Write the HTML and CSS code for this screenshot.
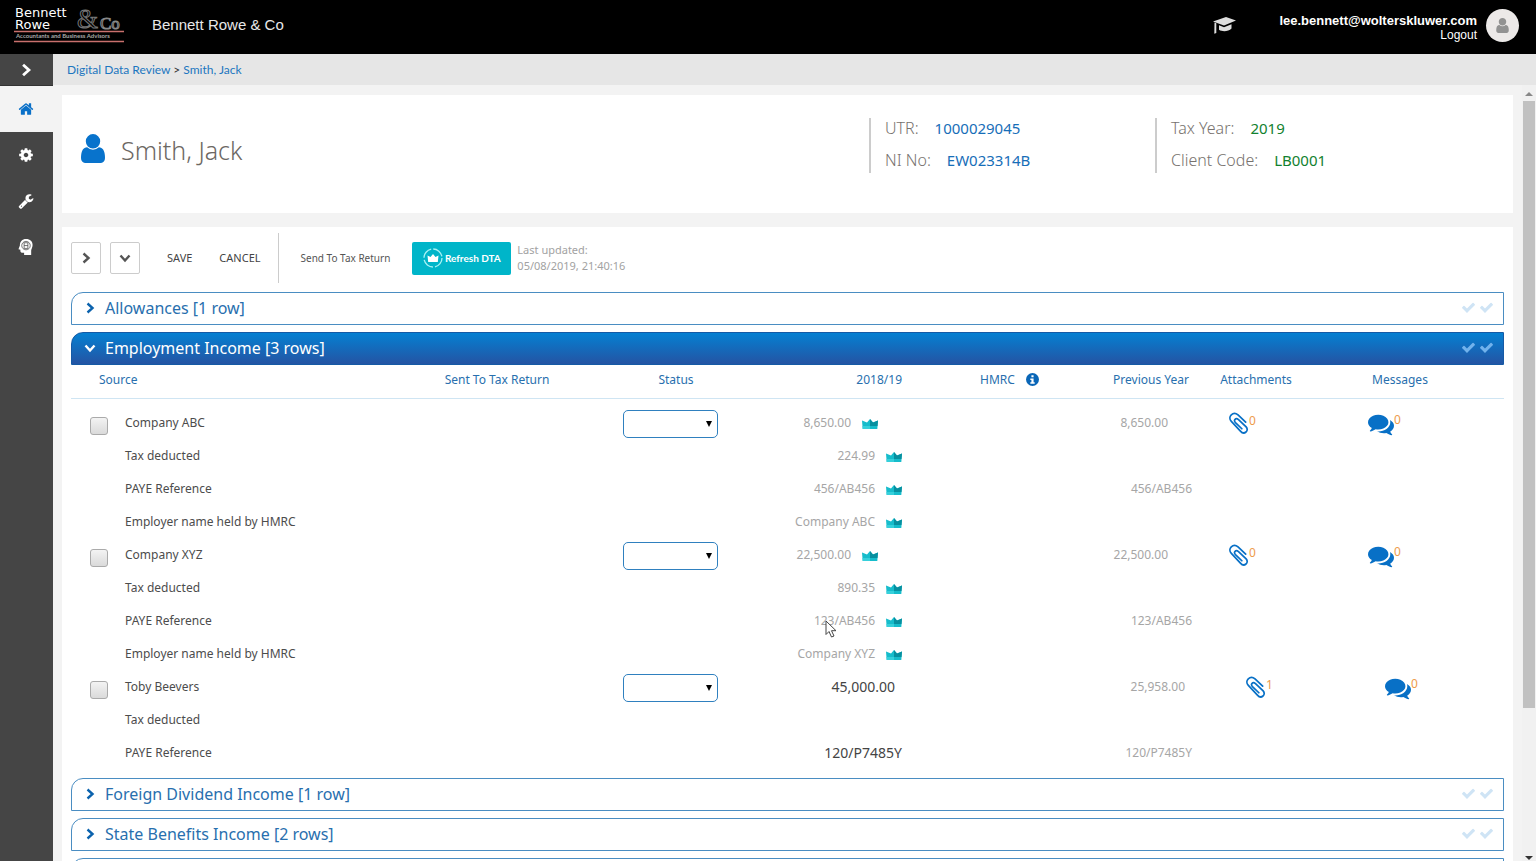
FILE: index.html
```html
<!DOCTYPE html>
<html lang="en">
<head>
<meta charset="utf-8">
<title>Digital Data Review - Smith, Jack</title>
<link rel="stylesheet" href="styles.css">
</head>
<body>
<svg class="sprite" aria-hidden="true">
  <symbol id="check" viewBox="0 0 1792 1792"><path d="M1671 566q0 40-28 68l-724 724-136 136q-28 28-68 28t-68-28l-136-136-362-362q-28-28-28-68t28-68l136-136q28-28 68-28t68 28l294 295 656-657q28-28 68-28t68 28l136 136q28 28 28 68z"/></symbol>
  <symbol id="home" viewBox="0 0 1792 1792"><path d="M1472 992v480q0 26-19 45t-45 19h-384v-384h-256v384h-384q-26 0-45-19t-19-45v-480q0-1 .5-3t.5-3l575-474 575 474q1 2 1 6zm223-69l-62 74q-8 9-21 11h-3q-13 0-21-7l-692-577-692 577q-12 8-24 7-13-2-21-11l-62-74q-8-10-7-23.500t11-21.500l719-599q32-26 76-26t76 26l244 204v-195q0-14 9-23t23-9h192q14 0 23 9t9 23v408l219 182q10 8 11 21.500t-7 23.500z"/></symbol>
  <symbol id="cog" viewBox="0 0 1792 1792"><path d="M1152 896q0-106-75-181t-181-75-181 75-75 181 75 181 181 75 181-75 75-181zm512-109v222q0 12-8 23t-20 13l-185 28q-19 54-39 91 35 50 107 138 10 12 10 25t-9 23q-27 37-99 108t-94 71q-12 0-26-9l-138-108q-44 23-91 38-16 136-29 186-7 28-36 28h-222q-14 0-24.500-8.500t-11.500-21.500l-28-184q-49-16-90-37l-141 107q-10 9-25 9-14 0-25-11-126-114-165-168-7-10-7-23 0-12 8-23 15-21 51-66.500t54-70.500q-27-50-41-99l-183-27q-13-2-21-12.500t-8-23.500v-222q0-12 8-23t19-13l186-28q14-46 39-92-40-57-107-138-10-12-10-24 0-10 9-23 26-36 98.500-107.500t94.500-71.500q13 0 26 10l138 107q44-23 91-38 16-136 29-186 7-28 36-28h222q14 0 24.500 8.500t11.500 21.500l28 184q49 16 90 37l142-107q9-9 24-9 13 0 25 10 129 119 165 170 7 8 7 22 0 12-8 23-15 21-51 66.500t-54 70.500q26 50 41 98l183 28q13 2 21 12.500t8 23.500z"/></symbol>
  <symbol id="wrench" viewBox="0 0 1792 1792"><path d="M448 1472q0-26-19-45t-45-19-45 19-19 45 19 45 45 19 45-19 19-45zm644-420l-682 682q-37 37-90 37-52 0-91-37l-106-108q-38-36-38-90 0-53 38-91l681-681q39 98 114.500 173.500t173.500 114.500zm634-435q0 39-23 106-47 134-164.500 217.500t-258.500 83.500q-185 0-316.500-131.500t-131.500-316.500 131.500-316.500 316.500-131.500q58 0 121.500 16.500t107.500 46.500q16 11 16 28t-16 28l-293 169v224l193 107q5-3 79-48.500t135.500-81 70.500-35.500q15 0 23.500 10t8.500 25z"/></symbol>
  <symbol id="user" viewBox="256 128 1280 1536"><path d="M1536 1399q0 109-62.500 187t-150.500 78h-854q-88 0-150.500-78t-62.500-187q0-85 8.500-160.500t31.500-152 58.500-131 94-89 134.500-34.500q131 128 313 128t313-128q76 0 134.500 34.500t94 89 58.500 131 31.500 152 8.500 160.500zm-256-887q0 159-112.500 271.500t-271.500 112.500-271.500-112.500-112.500-271.500 112.500-271.500 271.500-112.500 271.500 112.500 112.500 271.500z"/></symbol>
  <symbol id="comments" viewBox="0 0 1792 1792"><path d="M1408 768q0 139-94 257t-256.500 186.500-353.500 68.500q-86 0-176-16-124 88-278 128-36 9-86 16h-3q-11 0-20.500-8t-11.500-21q-1-3-1-6.500t.5-6.500 2-6l2.500-5 3.500-5.500 4-5 4.500-5 4-4.500q5-6 23-25t26-29.500 22.500-29 25-38.500 20.500-44q-124-72-195-177t-71-224q0-139 94-257t256.500-186.500 353.500-68.500 353.500 68.500 256.500 186.500 94 257zm384 256q0 120-71 224.500t-195 176.500q10 24 20.500 44t25 38.500 22.500 29 26 29.500 23 25q1 1 4 4.500t4.500 5 4 5 3.500 5.500l2.500 5 2 6 .5 6.500-1 6.500q-3 14-13 22t-22 7q-50-7-86-16-154-40-278-128-90 16-176 16-271 0-472-132 58 4 88 4 161 0 309-45t264-129q125-92 192-212t67-254q0-77-23-152 129 71 204 178t75 230z"/></symbol>
  <symbol id="clip" viewBox="0 0 22 24"><path d="M18.500 10.500 10.500 3C5.500-1.500-1 5 3.500 9.800l9.500 10.200c4 4.500 9.500-.5 6-4.500L11 8C8 5.500 5.500 8.500 7.800 11l6.700 6.500" fill="none" stroke="currentColor" stroke-width="1.800" stroke-linecap="round"/></symbol>
  <symbol id="crown" viewBox="0 0 16 10" preserveAspectRatio="none"><path fill="#16bccb" d="M0 1.500 5 3.500 8 0l3 3.500 5-2L15.300 10H.7z"/><path fill="#078f9f" d="M8 0l3 3.500 5-2-.5 5.500L8 7z"/><path fill="#36d0db" d="M.5 7H8v3H.7z"/></symbol>
  <symbol id="right" viewBox="0 0 10 12"><path d="M2.500 1.500 7.500 6l-5 4.500" fill="none" stroke="currentColor" stroke-width="2.400"/></symbol>
  <symbol id="down" viewBox="0 0 12 10"><path d="M1.500 2.500 6 7.500l4.500-5" fill="none" stroke="currentColor" stroke-width="2.400"/></symbol>
  <symbol id="cap" viewBox="0 0 23 17"><path d="M0 4.500 13 0l10 3.500L11 8.500zM6 8.200l5 2 7.500-3v4.300c-3 3-9 3.500-12.500 1.200zM1.500 5.500l1.800.7V16l-2 .8z"/></symbol>
  <symbol id="head" viewBox="0 0 16 17"><path d="M8 0c4.500 0 7 2.500 7 6.500 0 3-1.500 4.500-1.500 6V17H6v-2.500H3.500C2 14.500 2 13 2 11.500L0 11l1.500-4C1.500 2.500 4 0 8 0z"/><g fill="none" stroke="#454545" stroke-width=".8"><circle cx="8" cy="7" r="4.500"/><path d="M6 4v6h4V4zM6 7h4"/></g></symbol>
</svg>

<header class="topbar">
  <svg class="logo" viewBox="0 0 112 38" role="img" aria-label="Bennett Rowe and Co">
    <text x="1" y="11" class="logo-name">Bennett</text>
    <text x="1" y="23" class="logo-name">Rowe</text>
    <text x="63" y="22" class="logo-amp">&amp;</text>
    <text x="86" y="23" class="logo-co">Co</text>
    <path d="M0 25.500h110M0 35.500h110" stroke="#c9706d" stroke-width="1.600"/>
    <text x="2" y="32" class="logo-tag">Accountants and Business Advisors</text>
  </svg>
  <span class="firm">Bennett Rowe &amp; Co</span>
  <svg class="i-cap"><use href="#cap"/></svg>
  <div class="account"><b>lee.bennett@wolterskluwer.com</b><a href="#">Logout</a></div>
  <span class="avatar"><svg><use href="#user"/></svg></span>
</header>

<div class="shell">
  <nav class="side">
    <button class="expand" aria-label="Expand menu"><svg><use href="#right"/></svg></button>
    <a class="active" href="#" aria-label="Home"><svg><use href="#home"/></svg></a>
    <a href="#" aria-label="Settings"><svg><use href="#cog"/></svg></a>
    <a href="#" aria-label="Tools"><svg><use href="#wrench"/></svg></a>
    <a href="#" aria-label="Knowledge"><svg><use href="#head"/></svg></a>
  </nav>
  <div class="page">
    <div class="crumbs"><a href="#">Digital Data Review</a> &gt; <a href="#">Smith, Jack</a></div>
    <div class="view">
      <main class="content">
        <section class="card client">
          <svg class="i-client"><use href="#user"/></svg>
          <h1>Smith, Jack</h1>
          <dl class="facts"><div><dt>UTR:</dt><dd>1000029045</dd></div><div><dt>NI No:</dt><dd>EW023314B</dd></div></dl>
          <dl class="facts green"><div><dt>Tax Year:</dt><dd>2019</dd></div><div><dt>Client Code:</dt><dd>LB0001</dd></div></dl>
        </section>

        <section class="card data">
          <div class="tools">
            <button class="square" aria-label="Expand rows"><svg><use href="#right"/></svg></button>
            <button class="square second" aria-label="Collapse rows"><svg><use href="#down"/></svg></button>
            <button class="plain">SAVE</button>
            <button class="plain cancel">CANCEL</button>
            <button class="plain send">Send To Tax Return</button>
            <button class="refresh"><svg viewBox="0 0 20 20"><circle cx="10" cy="10" r="9" fill="none" stroke="#a8f2f4" stroke-width="1.300" stroke-dasharray="12 2.137"/><path fill="#fff" d="M4.500 7.500 7.500 9 10 6l2.500 3 3-1.500-.7 6.500H5.200z"/></svg>Refresh DTA</button>
            <p class="updated">Last updated:<br>05/08/2019, 21:40:16</p>
          </div>

          <button class="bar"><svg class="chev"><use href="#right"/></svg><span>Allowances [1 row]</span><svg class="tick"><use href="#check"/></svg><svg class="tick"><use href="#check"/></svg></button>
          <button class="bar open"><svg class="chev"><use href="#down"/></svg><span>Employment Income [3 rows]</span><svg class="tick"><use href="#check"/></svg><svg class="tick"><use href="#check"/></svg></button>

          <table>
            <colgroup><col class="c-box"><col><col class="c-sent"><col class="c-status"><col class="c-value"><col class="c-hmrc"><col class="c-prev"><col class="c-att"><col class="c-msg"></colgroup>
            <thead><tr><th colspan="2" class="source">Source</th><th>Sent To Tax Return</th><th>Status</th><th class="num">2018/19</th><th class="num">HMRC <svg class="info" viewBox="0 0 12 12"><circle cx="6" cy="6" r="6" fill="#0a66b7"/><path d="M5 2h2v2H5zM4 5h3v3.500h1V10H4V8.500h1v-2H4z" fill="#fff"/></svg></th><th class="num prev">Previous Year</th><th>Attachments</th><th class="msg">Messages</th></tr></thead>
            <tbody>
              <tr class="main"><td class="box"><input type="checkbox" id="abc"></td><td><label for="abc">Company ABC</label></td><td></td><td class="status"><span class="pick"><select aria-label="Status of Company ABC"><option></option></select></span></td><td class="num">8,650.00<svg class="crown"><use href="#crown"/></svg></td><td></td><td class="num">8,650.00</td><td class="links"><a href="#"><svg class="clip"><use href="#clip"/></svg><sup>0</sup></a></td><td class="links"><a href="#"><svg class="talk"><use href="#comments"/></svg><sup>0</sup></a></td></tr>
              <tr><td></td><td>Tax deducted</td><td></td><td></td><td class="num">224.99<svg class="crown"><use href="#crown"/></svg></td><td></td><td></td><td></td><td></td></tr>
              <tr><td></td><td>PAYE Reference</td><td></td><td></td><td class="num">456/AB456<svg class="crown"><use href="#crown"/></svg></td><td></td><td class="num">456/AB456</td><td></td><td></td></tr>
              <tr><td></td><td>Employer name held by HMRC</td><td></td><td></td><td class="num">Company ABC<svg class="crown"><use href="#crown"/></svg></td><td></td><td></td><td></td><td></td></tr>
              <tr class="main"><td class="box"><input type="checkbox" id="xyz"></td><td><label for="xyz">Company XYZ</label></td><td></td><td class="status"><span class="pick"><select aria-label="Status of Company XYZ"><option></option></select></span></td><td class="num">22,500.00<svg class="crown"><use href="#crown"/></svg></td><td></td><td class="num">22,500.00</td><td class="links"><a href="#"><svg class="clip"><use href="#clip"/></svg><sup>0</sup></a></td><td class="links"><a href="#"><svg class="talk"><use href="#comments"/></svg><sup>0</sup></a></td></tr>
              <tr><td></td><td>Tax deducted</td><td></td><td></td><td class="num">890.35<svg class="crown"><use href="#crown"/></svg></td><td></td><td></td><td></td><td></td></tr>
              <tr><td></td><td>PAYE Reference</td><td></td><td></td><td class="num">123/AB456<svg class="crown"><use href="#crown"/></svg></td><td></td><td class="num">123/AB456</td><td></td><td></td></tr>
              <tr><td></td><td>Employer name held by HMRC</td><td></td><td></td><td class="num">Company XYZ<svg class="crown"><use href="#crown"/></svg></td><td></td><td></td><td></td><td></td></tr>
              <tr class="main manual"><td class="box"><input type="checkbox" id="toby"></td><td><label for="toby">Toby Beevers</label></td><td></td><td class="status"><span class="pick"><select aria-label="Status of Toby Beevers"><option></option></select></span></td><td class="num typed">45,000.00</td><td></td><td class="num">25,958.00</td><td class="links"><a href="#"><svg class="clip"><use href="#clip"/></svg><sup>1</sup></a></td><td class="links"><a href="#"><svg class="talk"><use href="#comments"/></svg><sup>0</sup></a></td></tr>
              <tr><td></td><td>Tax deducted</td><td></td><td></td><td></td><td></td><td></td><td></td><td></td></tr>
              <tr><td></td><td>PAYE Reference</td><td></td><td></td><td class="num typed">120/P7485Y</td><td></td><td class="num">120/P7485Y</td><td></td><td></td></tr>
            </tbody>
          </table>

          <button class="bar"><svg class="chev"><use href="#right"/></svg><span>Foreign Dividend Income [1 row]</span><svg class="tick"><use href="#check"/></svg><svg class="tick"><use href="#check"/></svg></button>
          <button class="bar"><svg class="chev"><use href="#right"/></svg><span>State Benefits Income [2 rows]</span><svg class="tick"><use href="#check"/></svg><svg class="tick"><use href="#check"/></svg></button>
          <div class="bar"></div>
        </section>
      </main>
      <div class="scroll" aria-hidden="true"><i class="up"></i><i class="thumb"></i><i class="dn"></i></div>
    </div>
  </div>
</div>
<svg class="pointer" viewBox="0 0 12 18" aria-hidden="true"><path d="M1 1v13.500l3-3 2.500 5.500 2.500-1-2.500-5.300H11z" fill="#fff" stroke="#444"/></svg>
</body>
</html>
```
FILE: styles.css
```css
* { box-sizing: border-box; }
body { margin: 0; height: 100vh; display: flex; flex-direction: column; overflow: hidden; background: #f3f3f3; font: 12px/16px "Noto Sans", sans-serif; color: #4c4c4c; }
a { text-decoration: none; color: #1c76c0; }
button { font: inherit; border: 0; background: none; padding: 0; color: inherit; }
svg { fill: currentColor; flex: none; display: block; }
.sprite { position: absolute; width: 0; height: 0; }

.topbar { height: 54px; flex: none; background: #000; color: #fff; display: flex; align-items: center; padding: 0 17px 4px 14px; font-family: "Liberation Sans", Arial, sans-serif; }
.logo { width: 112px; height: 38px; overflow: visible; }
.logo text { font-family: Lato, sans-serif; fill: #fff; }
.logo .logo-name { font-family: "DejaVu Sans", sans-serif; font-size: 13px; line-height: 12px; }
.logo .logo-amp { font-family: "Liberation Serif", serif; font-size: 27px; fill: #000; stroke: #777; }
.logo .logo-co { font-family: "Liberation Serif", serif; font-size: 17px; fill: #222; stroke: #888; }
.logo .logo-tag { font-size: 6px; font-weight: 700; fill: #aaa; }
.firm { font-size: 15px; margin-left: 26px; flex: 1; color: #e8e8e8; }
.i-cap { width: 23px; height: 17px; color: #ddd; }
.account { margin-left: 43px; padding-top: 5px; font-size: 13px; line-height: 14px; text-align: right; display: flex; flex-direction: column; }
.account a { color: #fff; font-size: 12px; }
.avatar { width: 33px; height: 33px; margin-left: 9px; border-radius: 50%; background: #ece9e8; color: #929292; display: flex; align-items: center; justify-content: center; }
.avatar svg { width: 13px; height: 15px; }

.shell { flex: 1; min-height: 0; display: flex; }
.side { width: 53px; background: #454545; color: #fff; display: flex; flex-direction: column; }
.side a, .side button { height: 46px; display: flex; align-items: center; justify-content: center; color: #fff; padding-right: 1px; }
.side .expand { height: 32px; border-bottom: 1px solid #333; }
.side .expand svg { width: 12px; height: 14px; }
.side .active { background: #f3f3f3; color: #0a70c8; }
.side a svg { width: 16px; height: 16px; }
.page { flex: 1; min-width: 0; display: flex; flex-direction: column; }
.crumbs { height: 31px; flex: none; background: #e6e6e6; padding: 8px 14px; font: 12px/16px Lato, sans-serif; color: #333; }
.view { flex: 1; min-height: 0; display: flex; }
.content { flex: 1; min-width: 0; padding: 10px 9px 0; overflow: hidden; display: flex; flex-direction: column; gap: 14px; }
.card { background: #fff; flex: none; }
.client { height: 118px; display: flex; align-items: flex-start; padding: 23px 19px 0; }
.i-client { width: 24px; height: 29px; color: #0873cc; margin-top: 16px; }
h1 { margin: 15px 0 0 16px; flex: 1; font-size: 25px; line-height: 34px; font-weight: 300; color: #6c6763; }
.facts { margin: 0; width: 286px; height: 55px; border-left: 2px solid #ccc; padding-left: 14px; font-size: 16px; line-height: 20px; display: flex; flex-direction: column; gap: 12px; }
.facts.green { width: 339px; }
.facts div { display: flex; gap: 16px; }
.facts dt { color: #77726e; font-weight: 300; }
.facts dd { margin: 0; font-size: 15px; color: #176eb8; }
.facts.green dd { color: #12812f; }

.data { padding: 6px 9px 0; }
.tools { height: 50px; display: flex; align-items: center; margin-bottom: 9px; font-size: 11px; }
.square { width: 30px; height: 32px; border: 1px solid #ccc; border-radius: 2px; color: #555; display: flex; align-items: center; justify-content: center; }
.square svg { width: 12px; height: 12px; }
.second { margin-left: 9px; }
.plain { color: #444; margin-left: 27px; }
.cancel { height: 50px; padding-right: 17px; border-right: 1px solid #ccc; }
.send { margin-left: 22px; font-size: 10px; color: #555; }
.refresh { width: 99px; height: 33px; margin-left: 22px; border-radius: 2px; background: #00b5c9; color: #fff; display: flex; align-items: center; justify-content: center; gap: 2px; font: 700 10px/16px Lato, sans-serif; }
.refresh svg { width: 20px; height: 20px; }
.updated { margin: 0 0 0 6px; font-size: 11px; color: #a2a2a2; }

.bar { width: 100%; height: 33px; margin-bottom: 7px; border: 1px solid #4a8dc2; border-radius: 12px 0 0 0; display: flex; align-items: center; gap: 3px; padding: 0 9px 2px 12px; font-size: 16px; color: #286fae; text-align: left; }
.bar span { flex: 1; margin-left: 6px; }
.bar .chev { width: 12px; height: 12px; color: #0b62ad; }
.bar .tick { width: 15px; height: 15px; color: #cfe4f5; }
.bar.open { margin: 0; border-color: #155aa5; background: linear-gradient(#0580d2, #2454a3); color: #fff; }
.bar.open .chev { color: #fff; }
.bar.open .tick { color: #71b2ec; }

table { width: 100%; table-layout: fixed; border-collapse: separate; border-spacing: 0; margin-bottom: 8px; }
.c-box { width: 54px; } .c-sent { width: 128px; } .c-status { width: 230px; } .c-value { width: 111px; } .c-hmrc { width: 137px; } .c-prev { width: 153px; } .c-att { width: 128px; } .c-msg { width: 184px; }
th { height: 34px; padding: 0 0 4px; border-bottom: 1px solid #cfe5f3; font-size: 12px; font-weight: 400; color: #286fae; white-space: nowrap; }
th.source { text-align: left; padding-left: 28px; }
th.prev { padding-right: 3px; }
th.msg { padding-right: 24px; }
.info { display: inline-block; width: 13px; height: 13px; margin-left: 8px; vertical-align: -2px; }
tbody::before { content: ""; display: block; height: 8px; }
td { height: 33px; padding: 0 0 2px; white-space: nowrap; }
.num { text-align: right; }
td.num { color: #a6a6a6; }
.main td.num { padding-right: 24px; }
.manual td.num { padding-right: 7px; }
td.typed { color: #444; font-size: 14px; }
.crown { display: inline-block; width: 16px; height: 10px; margin-left: 11px; vertical-align: -2px; }
.box { padding-left: 19px; }
.box input { appearance: none; display: block; width: 18px; height: 18px; margin: 6px 0 0; border: 1px solid #aaa; border-radius: 3px; background: linear-gradient(#f3f3f3, #dadada); }
.status { padding: 0 0 0 62px; }
.pick { position: relative; display: block; width: 95px; height: 28px; }
.pick select { appearance: none; width: 100%; height: 100%; border: 1px solid #2f80bf; border-radius: 5px; background: #fff; }
.pick::after { content: ""; position: absolute; right: 6px; top: 11px; border: 3px solid transparent; border-top: 6px solid #000; border-bottom: 0; }
.links { padding: 0 0 0 36px; }
.links + .links { padding-left: 48px; }
.manual .links { padding-left: 53px; }
.manual .links + .links { padding-left: 65px; }
.links a { display: flex; align-items: center; color: #0870c6; }
.clip { width: 21px; height: 23px; }
.talk { width: 26px; height: 26px; }
.links sup { font-size: 12px; line-height: 24px; align-self: flex-start; color: #ee9b4b; margin-top: -3px; }

.scroll { width: 14px; background: #f1f1f1; display: flex; flex-direction: column; align-items: center; padding: 7px 0 1px; }
.up, .dn { border: 4px solid transparent; border-top: 0; border-bottom: 4px solid #888; }
.thumb { width: 12px; height: 79%; margin: 5px 0 auto; background: #c1c1c1; }
.dn { border-bottom: 0; border-top: 4px solid #333; }
.pointer { position: absolute; left: 825px; top: 620px; width: 12px; height: 18px; }
```
